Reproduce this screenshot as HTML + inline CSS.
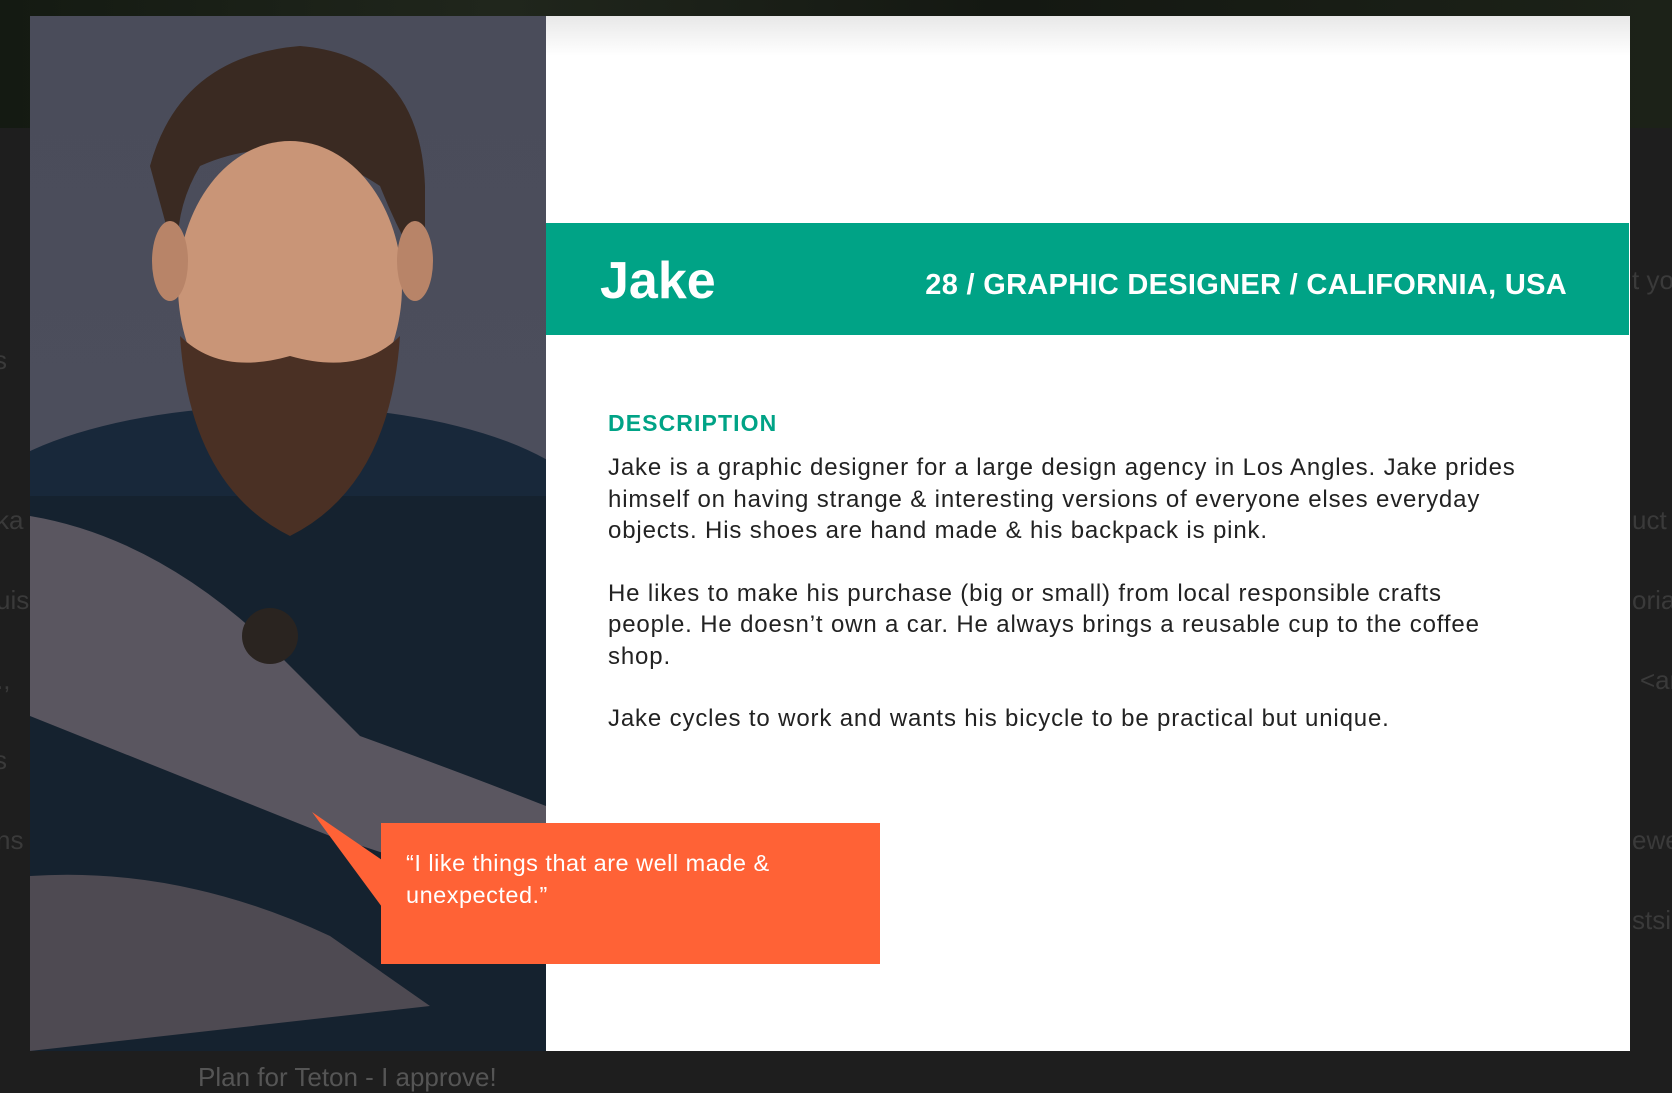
<!DOCTYPE html>
<html><head><meta charset="utf-8"><style>
*{margin:0;padding:0;box-sizing:border-box}
body{width:1672px;height:1086px;overflow:hidden;background:#1e1e1e;font-family:"Liberation Sans",sans-serif;position:relative}
.topbg{position:absolute;left:0;top:0;width:1672px;height:128px;background:linear-gradient(90deg,#141a12,#20261c 30%,#141812 60%,#1c2218);}
.side{position:absolute;color:#3a3a3a;font-size:26px;white-space:nowrap}
.modal{position:absolute;left:30px;top:16px;width:1600px;height:1035px;background:#fff}
.shade{position:absolute;left:516px;top:0;right:0;height:40px;background:linear-gradient(#e8e8e8,#fff)}
.photo{position:absolute;left:0;top:0;width:516px;height:1035px;background:linear-gradient(#4a4c5a,#4c4e5c 45%,#2a3444 55%,#16202c 75%,#0c1420);overflow:hidden}
.band{position:absolute;left:516px;top:207px;width:1083px;height:112px;background:#00a386;color:#fff}
.name{position:absolute;left:54px;top:28px;font-size:52px;font-weight:bold}
.meta{position:absolute;right:62px;top:46px;font-size:29px;font-weight:bold;letter-spacing:0.3px}
.desc{position:absolute;left:578px;top:394px;color:#00a386;font-weight:bold;font-size:23px;letter-spacing:1.1px}
.txt{position:absolute;left:578px;top:436px;color:#222;font-size:24px;line-height:31.5px;letter-spacing:0.85px;white-space:nowrap}
.txt p{margin-bottom:31px}
.quote{position:absolute;left:351px;top:807px;width:499px;height:141px;background:#ff6236;color:#fff;font-size:23.5px;line-height:32px;padding:24px 25px;letter-spacing:0.5px}
.tri{position:absolute;left:282px;top:796px}
</style></head><body>
<div class="topbg"></div>
<div class="side" style="left:-6px;top:345px">s</div>
<div class="side" style="left:-4px;top:505px">ka</div>
<div class="side" style="left:-4px;top:585px">uis</div>
<div class="side" style="left:-4px;top:665px">.,</div>
<div class="side" style="left:-6px;top:745px">s</div>
<div class="side" style="left:-4px;top:825px">ns</div>
<div class="side" style="left:1632px;top:265px">t yo</div>
<div class="side" style="left:1632px;top:505px">uct</div>
<div class="side" style="left:1632px;top:585px">oria</div>
<div class="side" style="left:1640px;top:665px">&lt;ar</div>
<div class="side" style="left:1632px;top:825px">ewe</div>
<div class="side" style="left:1632px;top:905px">stsi</div>
<div class="side" style="left:198px;top:1062px;color:#555">Plan for Teton - I approve!</div>
<div class="modal">
 <div class="photo">
  <svg width="516" height="1035" viewBox="0 0 516 1035">
   <ellipse cx="250" cy="510" rx="320" ry="120" fill="#18283a"/>
   <rect x="0" y="480" width="516" height="560" fill="#15222f"/>
   <path d="M120 150 Q150 40 270 30 Q390 40 395 170 L395 260 Q370 220 350 170 Q260 110 170 150 Q140 200 150 260 Z" fill="#3a2a22"/>
   <ellipse cx="260" cy="270" rx="112" ry="145" fill="#c99577"/>
   <ellipse cx="140" cy="245" rx="18" ry="40" fill="#b88468"/>
   <ellipse cx="385" cy="245" rx="18" ry="40" fill="#b88468"/>
   <path d="M150 320 Q160 470 260 520 Q360 470 370 320 Q330 360 260 340 Q190 360 150 320Z" fill="#4a3024"/>
   <path d="M0 500 Q120 520 230 620 L330 720 Q440 760 516 790 L516 900 Q400 850 300 820 L0 700Z" fill="#5a5660"/>
   <path d="M0 860 Q150 850 300 920 L400 990 L0 1035Z" fill="#4e4a52"/>
   <circle cx="240" cy="620" r="28" fill="#2a2420"/>
  </svg>
 </div>
 <div class="shade"></div>
 <div class="band"><div class="name">Jake</div><div class="meta">28 / GRAPHIC DESIGNER / CALIFORNIA, USA</div></div>
 <div class="desc">DESCRIPTION</div>
 <div class="txt">
  <p>Jake is a graphic designer for a large design agency in Los Angles. Jake prides<br>himself on having strange &amp; interesting versions of everyone elses everyday<br>objects. His shoes are hand made &amp; his backpack is pink.</p>
  <p>He likes to make his purchase (big or small) from local responsible crafts<br>people. He doesn’t own a car. He always brings a reusable cup to the coffee<br>shop.</p>
  <p>Jake cycles to work and wants his bicycle to be practical but unique.</p>
 </div>
 <svg class="tri" width="80" height="120"><polygon points="0,0 70,48 70,95" fill="#ff6236"/></svg>
 <div class="quote">“I like things that are well made &amp;<br>unexpected.”</div>
</div>
</body></html>
